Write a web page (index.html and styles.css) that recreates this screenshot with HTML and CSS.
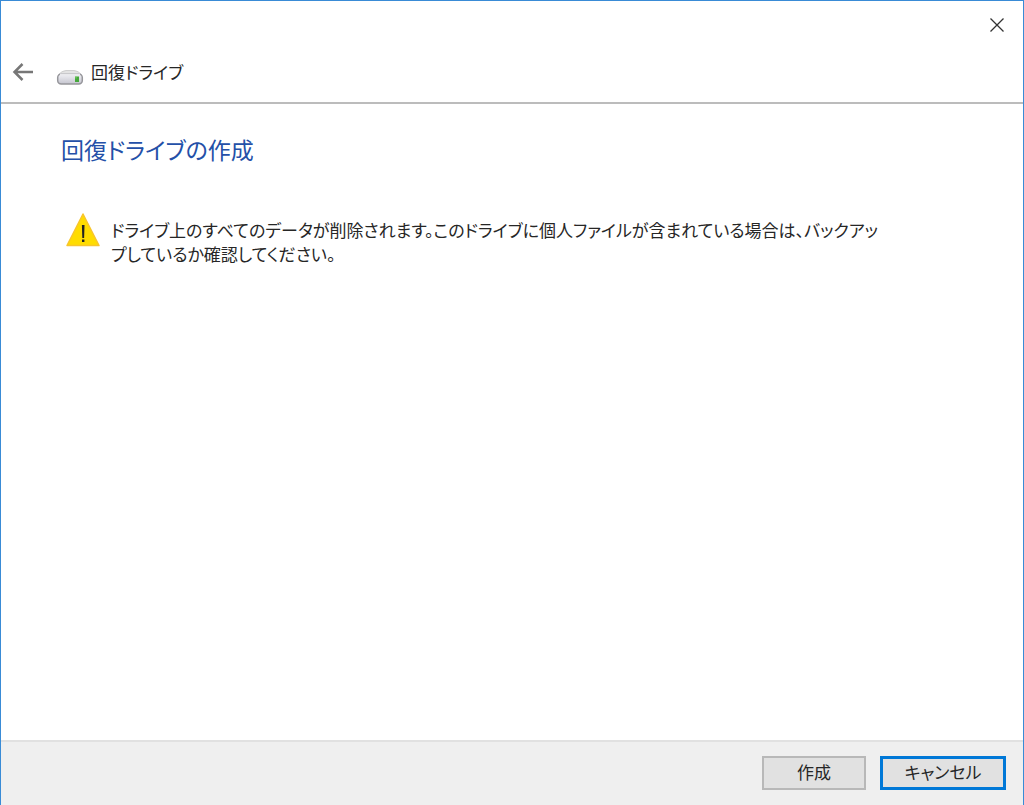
FILE: index.html
```html
<!DOCTYPE html>
<html lang="ja">
<head>
<meta charset="utf-8">
<title>回復ドライブ</title>
<link rel="stylesheet" href="styles.css">
</head>
<body>
<main class="wizard">
  <header class="titlebar">
    <div class="caption">
      <button class="close" type="button" aria-label="閉じる">
        <svg width="16" height="16" viewBox="0 0 16 16"><path d="M1.500 1.500l13 13M14.500 1.500l-13 13" fill="none" stroke="#333" stroke-width="1.300"/></svg>
      </button>
    </div>
    <div class="nav">
      <button class="back" type="button" aria-label="戻る">
        <svg width="22" height="20" viewBox="0 0 22 20"><path d="M21 10H3M10.500 2L2.500 10l8 8" fill="none" stroke="#777" stroke-width="2.500"/></svg>
      </button>
      <svg class="drive" width="28" height="18" viewBox="0 0 28 18" aria-hidden="true">
        <defs><linearGradient id="face" x1="0" y1="0" x2="0" y2="1"><stop offset="0" stop-color="#f1f1f5"/><stop offset="1" stop-color="#c5c5cf"/></linearGradient></defs>
        <path d="M2 8Q5 2.500 10 2.500h8q5 0 8 5.500z" fill="#e3e3e3" stroke="#cfcfcf"/>
        <rect x="1.700" y="6" width="24.600" height="10" rx="3.500" fill="url(#face)" stroke="#96969b" stroke-width="1.500"/>
        <path d="M4 6.500h20" stroke="#e9e9ec" stroke-width="2"/>
        <rect x="19" y="8.500" width="4" height="5.500" fill="#46a83c"/>
        <path d="M20 8.500v2" stroke="#7fd566"/>
      </svg>
      <span class="name">回復ドライブ</span>
    </div>
  </header>
  <section class="content">
    <h1>回復ドライブの作成</h1>
    <div class="warning">
      <svg width="34" height="34" viewBox="0 0 34 34" aria-hidden="true"><path d="M17 1L33 32.500H1z" fill="#ffdc00" stroke="#f8c52c" stroke-width="1.500" stroke-linejoin="round"/><path d="M15.900 12h2.600l-.4 13h-1.800z" fill="#222"/><rect x="16" y="26.500" width="2.400" height="2.500" fill="#222"/></svg>
      <p>ドライブ上のすべてのデータが削除されます。このドライブに個人ファイルが含まれている場合は、バックアッ<br>プしているか確認してください。</p>
    </div>
  </section>
  <footer class="actions">
    <button class="btn" type="button">作成</button>
    <button class="btn primary" type="button">キャンセル</button>
  </footer>
</main>
</body>
</html>
```
FILE: styles.css
```css
* { box-sizing: border-box; }
body {
  margin: 0;
  font-family: "Noto Sans CJK JP", sans-serif;
  font-feature-settings: "palt";
  color: #262626;
}
button { font: inherit; font-feature-settings: inherit; color: inherit; padding: 0; }
svg { display: block; }
.wizard {
  display: flex;
  flex-direction: column;
  min-height: 100vh;
  background: #fff;
  border: 1px solid #398bd6;
  border-bottom: 0;
}
.titlebar { border-bottom: 2px solid #bcbcbc; }
.caption { display: flex; justify-content: flex-end; }
.close, .back {
  display: grid;
  place-items: center;
  background: none;
  border: 0;
}
.close { width: 52px; height: 47px; }
.nav {
  display: flex;
  align-items: center;
  height: 54px;
  padding-bottom: 7px;
}
.back { width: 44px; height: 44px; }
.drive { margin: 10px 7px 0 11px; }
.name { font-size: 17px; line-height: 24px; }
.content { flex: 1; padding: 27px 60px; }
h1 {
  margin: 0;
  font-size: 23px;
  font-weight: 400;
  line-height: 36px;
  color: #2450a8;
}
.warning {
  display: flex;
  align-items: flex-start;
  gap: 11px;
  margin-top: 46px;
  padding-left: 5px;
}
.warning p {
  margin: 5px 0 0;
  font-size: 17px;
  line-height: 24px;
}
.actions {
  display: flex;
  justify-content: flex-end;
  gap: 14px;
  padding: 14px 17px 15px;
  background: #efefef;
  border-top: 2px solid #e1e1e1;
}
.btn {
  min-width: 104px;
  height: 34px;
  padding-bottom: 2px;
  font-size: 17px;
  line-height: 24px;
  background: #e1e1e1;
  border: 2px solid #b8b8b8;
}
.primary { min-width: 126px; border: 3px solid #0078d7; }
```
